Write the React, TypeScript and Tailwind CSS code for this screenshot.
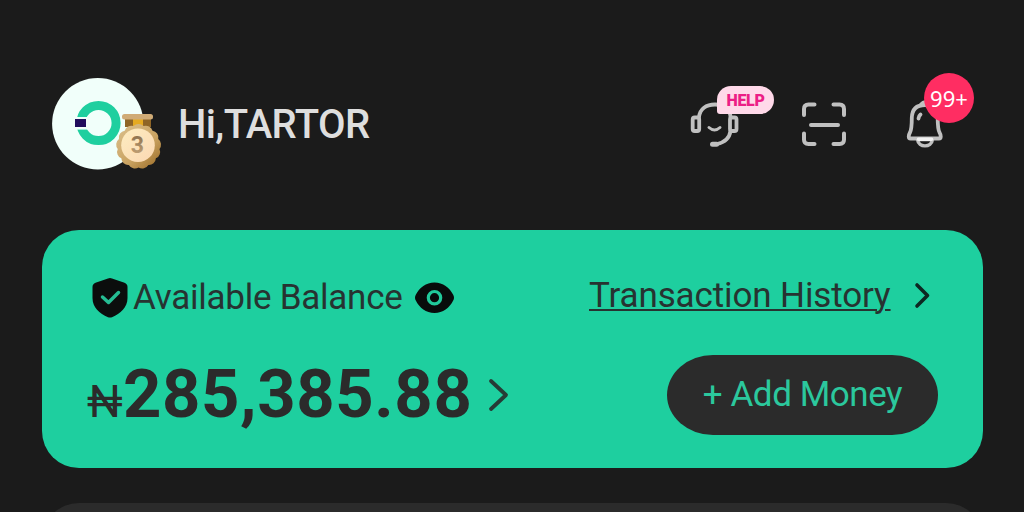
import React from "react";

function scallop(cx: number, cy: number, r: number, count: number) {
  const point = (i: number) => {
    const a = (i / count) * Math.PI * 2 - Math.PI / 2 + Math.PI / count;
    return `${(cx + r * Math.cos(a)).toFixed(2)} ${(cy + r * Math.sin(a)).toFixed(2)}`;
  };
  let d = `M${point(0)}`;
  for (let i = 1; i <= count; i++) d += `A7 7 0 0 1 ${point(i)}`;
  return d + "Z";
}

function Avatar() {
  return (
    <svg className="h-[96px] w-[112px] shrink-0" viewBox="52 76 112 96" fill="none">
      <defs>
        <linearGradient id="gold" x1="120" y1="128" x2="156" y2="166" gradientUnits="userSpaceOnUse">
          <stop stopColor="#d9bd88" />
          <stop offset="0.6" stopColor="#c9a261" />
          <stop offset="1" stopColor="#a2742f" />
        </linearGradient>
        <linearGradient id="face" x1="124" y1="130" x2="152" y2="160" gradientUnits="userSpaceOnUse">
          <stop stopColor="#fdebbf" />
          <stop offset="1" stopColor="#fbd9b4" />
        </linearGradient>
        <linearGradient id="digit" x1="0" y1="136" x2="0" y2="153" gradientUnits="userSpaceOnUse">
          <stop stopColor="#8f7350" />
          <stop offset="1" stopColor="#bd9d72" />
        </linearGradient>
      </defs>
      <circle cx="97.8" cy="123.8" r="45.7" fill="#f1fffa" />
      <circle cx="98.5" cy="123" r="17.6" stroke="#1fcf9f" strokeWidth="9" />
      <rect x="74" y="117" width="13.5" height="12.6" fill="#f1fffa" />
      <rect x="75" y="119" width="11" height="8" fill="#210d5c" />
      <rect x="125" y="118" width="26" height="9" fill="#8f6526" />
      <rect x="133" y="119" width="10" height="8" fill="#e5aa22" />
      <rect x="122" y="114" width="31" height="5.600" rx="2.500" fill="#d0ab76" />
      <path d={scallop(138.6, 146.4, 21, 13)} fill="url(#gold)" />
      <circle cx="138" cy="145.200" r="16.800" fill="url(#face)" />
      <text x="137.300" y="153" textAnchor="middle" fontFamily="Roboto, sans-serif" fontWeight="700" fontSize="23" fill="url(#digit)">
        3
      </text>
    </svg>
  );
}

function Headset() {
  return (
    <svg className="h-[50px] w-[50px]" viewBox="690 99 50 50" fill="none" stroke="#c0c0c0" strokeWidth="3.800" strokeLinecap="round">
      <rect x="692.700" y="117.500" width="6.500" height="13.500" rx="2" />
      <rect x="730" y="117.500" width="6.500" height="13.500" rx="2" />
      <path d="M699 117C700 109 706 104.500 715 104.500C724 104.500 730 109 730.500 117" />
      <path d="M730.500 131C729.500 138 724 142.500 717 144" />
      <path d="M709 127.500Q714.500 132.500 720 127.500" strokeWidth="3" />
      <path d="M712.500 144.200H716.500" strokeWidth="5" />
    </svg>
  );
}

function Scan() {
  return (
    <svg className="h-[46px] w-[46px]" viewBox="801 101 46 46" fill="none" stroke="#c0c0c0" strokeWidth="4" strokeLinecap="round" strokeLinejoin="round">
      <path d="M804 115V109Q804 104.500 808.500 104.500H814.500M833.500 104.500H839.500Q844 104.500 844 109V115M844 133.500V139.500Q844 144 839.500 144H833.500M814.500 144H808.500Q804 144 804 139.500V133.500M811 125H838" />
    </svg>
  );
}

function Bell() {
  return (
    <svg className="h-[50px] w-[38px]" viewBox="906 100 38 50" fill="none" stroke="#c0c0c0" strokeWidth="3.800" strokeLinecap="round" strokeLinejoin="round">
      <path d="M921 105.500Q925 101 929 105.500" />
      <path d="M910.500 139.500C908 139.500 908.500 136 910 133.500C911.500 130.500 911.800 128 911.800 119C912 110 917 106 925 106C933 106 937.500 110 937.700 119C937.700 128 938 130.500 939.500 133.500C941 136 941.500 139.500 939 139.500Z" />
      <path d="M920.500 115.500Q918.700 117 918.500 119.500" />
      <path d="M917.500 140.500C918.500 149 931.500 149 932.500 140.500Z" strokeWidth="3.400" />
      <path d="M918.500 140.300H931.500" stroke="#f2f2f2" strokeWidth="3.600" />
    </svg>
  );
}

function Shield() {
  return (
    <svg className="h-[40px] w-[36px] shrink-0" viewBox="92 278 36 40" fill="none">
      <path d="M108 278.600Q110 277.600 112 278.600L124.500 282.800Q127.500 284 127.500 287V298C127.500 307.500 120.500 313.500 112 317.200Q110 318 108 317.200C99.500 313.500 92.500 307.500 92.500 298V287Q92.500 284 95.500 282.800Z" fill="#0b0d0d" />
      <path d="M102.500 297L108.500 302.500L118.500 292.500" stroke="#25bc93" strokeWidth="3.500" strokeLinecap="round" strokeLinejoin="round" />
    </svg>
  );
}

function Eye() {
  return (
    <svg className="h-[32px] w-[39px] shrink-0" viewBox="415 282 39 32" fill="none">
      <path d="M434.500 282.500C443 282.500 449.500 287.500 453.200 294.800Q454.800 297.700 453.200 300.600C449.500 308 443 313 434.500 313S419.500 308 415.800 300.600Q414.200 297.700 415.800 294.800C419.500 287.500 426 282.500 434.500 282.500Z" fill="#080b0b" />
      <circle cx="434.500" cy="297.700" r="6.200" stroke="#20c99b" strokeWidth="3.200" />
    </svg>
  );
}

export default function App() {
  return (
    <main className="flex h-[512px] w-[1024px] flex-col overflow-hidden bg-[#1b1b1b] font-['Roboto',sans-serif]">
      <header className="mt-[76px] flex h-[96px] items-center pl-[52px]">
        <Avatar />
        <h1 className="ml-[14px] w-[512px] pt-[2px] text-[40px] leading-[40px] font-medium tracking-[-0.6px] text-[#dedede]">Hi,TARTOR</h1>
        <div className="relative mr-[61px] shrink-0">
          <Headset />
          <span className="absolute top-[-13px] left-[27px] flex h-[28px] w-[57px] items-center justify-center rounded-[14px] rounded-bl-[3px] bg-[#ffd9e9] pt-px text-[16px] leading-none font-black tracking-[-0.300px] text-[#ec1e86]">
            HELP
          </span>
        </div>
        <div className="mr-[59px] shrink-0">
          <Scan />
        </div>
        <div className="relative shrink-0">
          <Bell />
          <span className="absolute top-[-26px] left-[18px] flex size-[50px] items-center justify-center rounded-full bg-[#ff2d62] font-['Noto_Sans',sans-serif] text-[22px] leading-none text-white">
            99+
          </span>
        </div>
      </header>

      <section className="mt-[58px] ml-[42px] flex h-[238px] w-[941px] shrink-0 flex-col rounded-[37px] bg-[#1ecf9f] pt-[48px] text-[#273331]">
        <div className="flex h-[40px] items-center justify-between pr-[50px] pl-[50px]">
          <div className="flex items-center">
            <Shield />
            <span className="ml-[5px] w-[282px] text-[35px] leading-[40px] tracking-[-0.25px] whitespace-nowrap">Available Balance</span>
            <Eye />
          </div>
          <a className="-mt-[4px] flex items-center">
            <span className="w-[302px] text-[35px] leading-[40px] tracking-[-0.120px] whitespace-nowrap underline decoration-[1.5px] underline-offset-[2px]">Transaction History</span>
            <svg className="ml-[22px] h-[28px] w-[20px]" viewBox="0 0 20 28" fill="none" stroke="#0d2822" strokeWidth="3.600" strokeLinecap="round" strokeLinejoin="round">
              <path d="M4 3L14.500 13.500L4 24" />
            </svg>
          </a>
        </div>
        <div className="mt-[37px] flex h-[80px] items-center justify-between pr-[45px] pl-[45px]">
          <div className="flex items-center">
            <p className="-mt-px flex h-[67px] items-baseline text-[67px] leading-[67px] font-bold tracking-[0.600px] whitespace-nowrap text-[#2b2b2b]">
              <span className="w-[36px] text-[45px] leading-none font-normal tracking-normal">₦</span>
              <span>285,385</span>
              <span>.88</span>
            </p>
            <svg className="ml-[15px] h-[36px] w-[24px]" viewBox="0 0 24 36" fill="none" stroke="#263c36" strokeWidth="3.800" strokeLinecap="round" strokeLinejoin="round">
              <path d="M4 4L19 18L4 32" />
            </svg>
          </div>
          <button className="flex h-[80px] w-[271px] items-center justify-center rounded-[46px/40px] bg-[#2b2b2b] pb-[2px] text-[35px] leading-none tracking-[-0.450px] text-[#2bc89d]">
            + Add Money
          </button>
        </div>
      </section>
      <section className="mt-[35px] ml-[42px] h-[100px] w-[941px] shrink-0 rounded-t-[37px] bg-[#2b2b2b]" />
    </main>
  );
}
